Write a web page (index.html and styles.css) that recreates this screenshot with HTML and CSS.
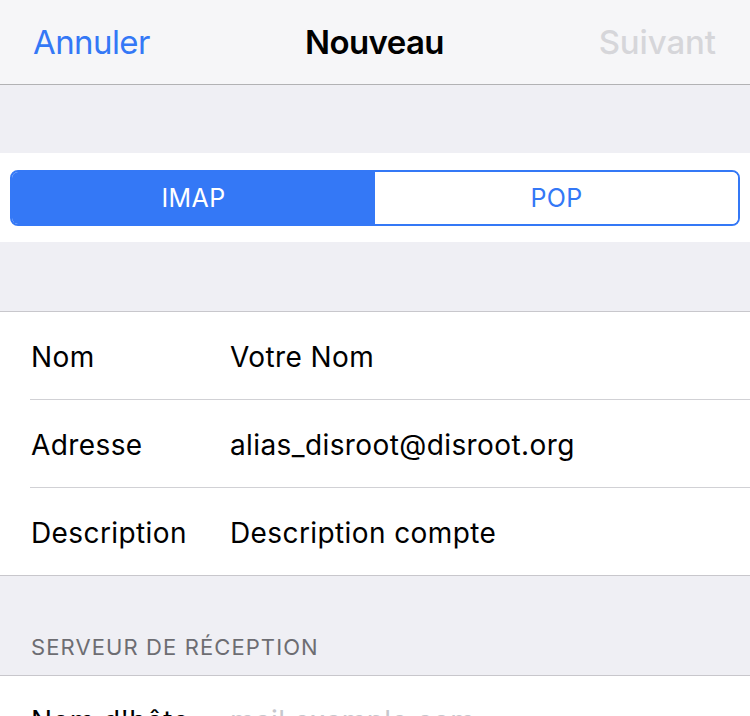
FILE: index.html
```html
<!DOCTYPE html>
<html lang="fr">
<head>
<meta charset="utf-8">
<title>Nouveau</title>
<link rel="stylesheet" href="styles.css">
</head>
<body>
<header class="navbar">
  <span class="nav-btn nav-left">Annuler</span>
  <span class="nav-title">Nouveau</span>
  <span class="nav-btn nav-right">Suivant</span>
</header>
<div class="spacer spacer-top"></div>
<section class="seg-section">
  <div class="segmented">
    <div class="seg seg-active">IMAP</div>
    <div class="seg">POP</div>
  </div>
</section>
<div class="spacer spacer-mid"></div>
<section class="group">
  <div class="row"><span class="label">Nom</span><span class="value">Votre Nom</span></div>
  <div class="row"><span class="label">Adresse</span><span class="value">alias_disroot@disroot.org</span></div>
  <div class="row"><span class="label">Description</span><span class="value">Description compte</span></div>
</section>
<div class="section-header">SERVEUR DE RÉCEPTION</div>
<section class="group">
  <div class="row"><span class="label">Nom d'hôte</span><span class="value placeholder">mail.example.com</span></div>
</section>
</body>
</html>
```
FILE: styles.css
```css
* { box-sizing: border-box; }
html, body {
  margin: 0;
  padding: 0;
  background: #efeff4;
  font-family: "Inter", "Roboto", "Liberation Sans", sans-serif;
  color: #000;
  overflow: hidden;
}
.navbar {
  height: 85px;
  background: #f6f6f8;
  border-bottom: 1px solid #b2b2b4;
  display: grid;
  grid-template-columns: 1fr auto 1fr;
  align-items: center;
  padding: 0 34px 0 33px;
  font-size: 33px;
  letter-spacing: -0.6px;
}
.nav-left { color: #3478f6; justify-self: start; }
.nav-right { color: #d6d6da; justify-self: end; font-weight: 500; letter-spacing: -0.1px; }
.nav-title { font-weight: 600; }
.spacer-top { height: 68px; }
.seg-section {
  background: #fff;
  padding: 17px 10px 16px 10px;
}
.segmented {
  display: flex;
  height: 56px;
  border: 2px solid #3478f6;
  border-radius: 8px;
  overflow: hidden;
}
.seg {
  flex: 1;
  display: flex;
  align-items: center;
  justify-content: center;
  font-size: 25px;
  letter-spacing: 0.4px;
  color: #3478f6;
  background: #fff;
}
.seg-active { background: #3478f6; color: #fff; }
.spacer-mid {
  height: 70px;
  border-bottom: 1px solid #c8c7cc;
}
.group {
  background: #fff;
  padding-left: 30px;
  border-bottom: 1px solid #c8c7cc;
}
.row {
  height: 88px;
  display: flex;
  align-items: center;
  padding-top: 3px;
  font-size: 28px;
  letter-spacing: 0.4px;
  border-bottom: 1px solid #d1d1d5;
}
.row:last-child { border-bottom: none; height: 87px; }
.label { width: 200px; flex: none; padding-left: 1px; }
.value { color: #000; }
.placeholder { color: #c7c7cd; }
.section-header {
  height: 100px;
  padding: 0 0 15px 31px;
  display: flex;
  align-items: flex-end;
  font-size: 22px;
  letter-spacing: 1.1px;
  color: #6d6d72;
  border-bottom: 1px solid #c8c7cc;
}
```
